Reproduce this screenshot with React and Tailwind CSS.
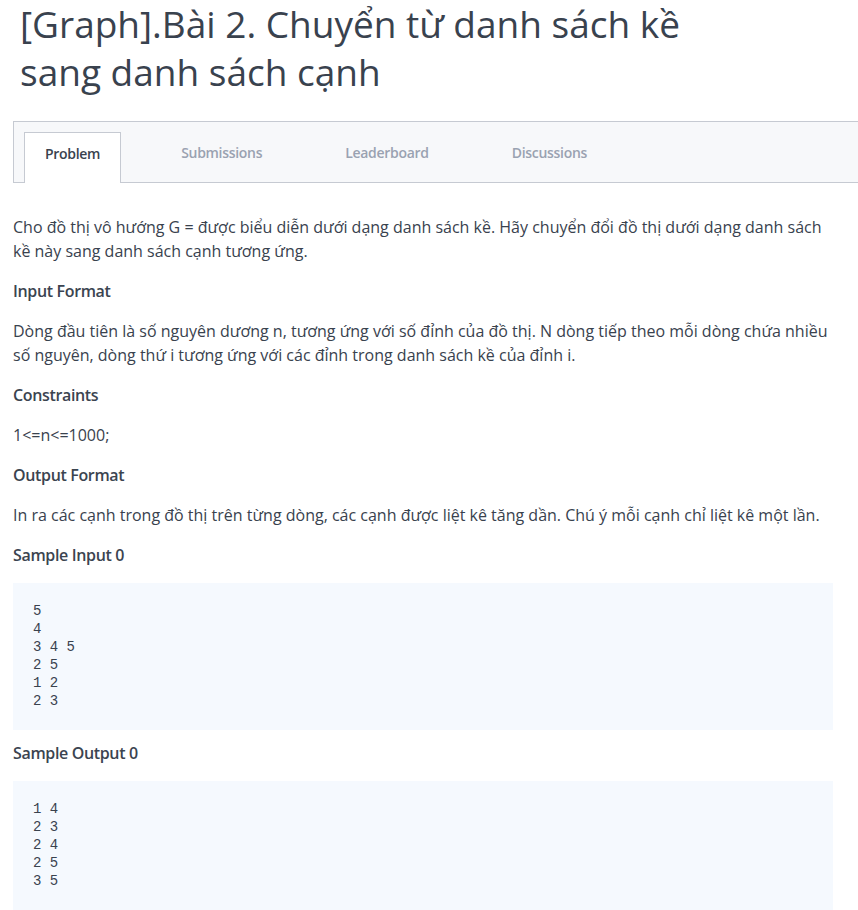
import React from "react";

const tabs = ["Problem", "Submissions", "Leaderboard", "Discussions"];

const CodeBlock = ({ lines }) => (
    <pre className="bg-[#f5f9fe] pl-5 pr-5 pt-[19px] pb-5 text-[14px] leading-[18px] text-[#39424e] font-['Liberation_Mono',monospace]">
        {lines.join("\n")}
    </pre>
);

const Heading = ({ children }) => (
    <h3 className="text-[16px] leading-[24px] font-semibold tracking-[-0.35px] text-[#3b4450]">{children}</h3>
);

const App = () => {
    return (
        <div className="w-[858px] min-h-[910px] bg-white overflow-hidden font-['Open_Sans',sans-serif] text-[#39424e]">
            <h1 className="pl-5 pr-[140px] text-[37px] leading-[48px] font-normal text-[#39424e]">
                [Graph].Bài 2. Chuyển từ danh sách kề sang danh sách cạnh
            </h1>

            <div className="ml-[13px] mr-[-20px] mt-[25px] h-[62px] bg-[#f7f8fa] border-y border-l border-[#c6cad2] flex items-end pl-[10px] gap-[43px]">
                {tabs.map((t, i) => (
                    <div
                        key={t}
                        className={
                            i === 0
                                ? "h-[51px] px-[20px] pb-[9px] mr-[-3px] flex items-center bg-white border-t border-x border-[#c6cad2] -mb-px text-[14px] font-semibold tracking-[-0.3px] text-[#39424e]"
                                : "h-[51px] px-[20px] pb-[9px] flex items-center text-[14px] font-semibold tracking-[-0.3px] text-[#9aa2b1]"
                        }
                    >
                        {t}
                    </div>
                ))}
            </div>

            <div className="ml-[13px] w-[820px] mt-[32px] flex flex-col gap-4 text-[16px] leading-[24px]">
                <p>Cho đồ thị vô hướng G = được biểu diễn dưới dạng danh sách kề. Hãy chuyển đổi đồ thị dưới dạng danh sách kề này sang danh sách cạnh tương ứng.</p>
                <Heading>Input Format</Heading>
                <p>Dòng đầu tiên là số nguyên dương n, tương ứng với số đỉnh của đồ thị. N dòng tiếp theo mỗi dòng chứa nhiều số nguyên, dòng thứ i tương ứng với các đỉnh trong danh sách kề của đỉnh i.</p>
                <Heading>Constraints</Heading>
                <p>1&lt;=n&lt;=1000;</p>
                <Heading>Output Format</Heading>
                <p>In ra các cạnh trong đồ thị trên từng dòng, các cạnh được liệt kê tăng dần. Chú ý mỗi cạnh chỉ liệt kê một lần.</p>
                <Heading>Sample Input 0</Heading>
                <CodeBlock lines={["5", "4", "3 4 5", "2 5", "1 2", "2 3"]} />
                <div className="-mt-[5px]">
                    <Heading>Sample Output 0</Heading>
                </div>
                <CodeBlock lines={["1 4", "2 3", "2 4", "2 5", "3 5"]} />
            </div>
        </div>
    );
};

export default App;
